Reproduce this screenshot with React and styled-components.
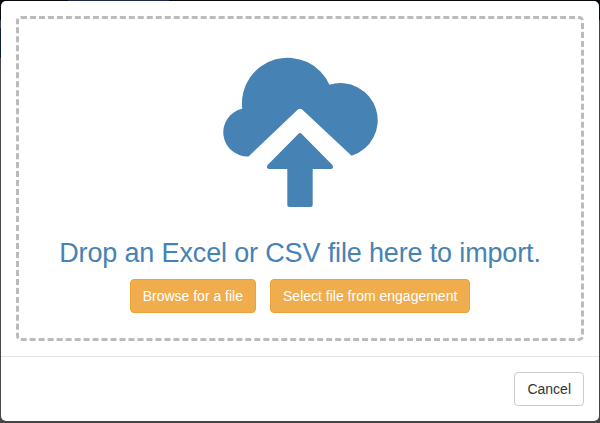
import React from "react";
import styled, { createGlobalStyle } from "styled-components";

const GlobalStyle = createGlobalStyle`
  *, *::before, *::after { box-sizing: border-box; }
  body {
    margin: 0;
    font-family: "Liberation Sans", Arial, sans-serif;
    font-size: 14px;
    line-height: 20px;
    color: #333;
  }
`;

const Backdrop = styled.div`
  height: 423px;
  padding: 1px 1px 2px;
  overflow: hidden;
  background:
    linear-gradient(90deg, #08080f 68px, #1b2b45 68px, #1b2b45 169px, #08080f 169px) 0 0 / 100% 1px no-repeat,
    linear-gradient(180deg, #08080f 20px, #444 20px, #444 28px, #0b2038 28px, #0b2038 58px, #484848 58px) 0 0 / 1px 100% no-repeat,
    linear-gradient(180deg, #08080f 20px, #444 20px);
`;

const Modal = styled.section`
  display: flex;
  flex-direction: column;
  height: 420px;
  background: #fff;
  border-radius: 5px;
`;

const ModalBody = styled.div`
  flex: 1;
  display: flex;
  padding: 15px;
`;

const DropZone = styled.div`
  flex: 1;
  display: flex;
  flex-direction: column;
  align-items: center;
  padding-top: 38px;
  border: 3px dashed #bbb;
  border-radius: 5px;
`;

const UploadIcon = styled.svg`
  display: block;
  width: 156px;
  height: 151px;
  fill: #4682b4;
`;

const Title = styled.h2`
  margin: 29px 0 10px;
  font-size: 27px;
  font-weight: 400;
  line-height: 32px;
  letter-spacing: -0.15px;
  white-space: nowrap;
  color: #4682b4;
`;

const Actions = styled.div`
  display: flex;
  gap: 14px;
`;

const Button = styled.button`
  height: 34px;
  padding: 6px 12px;
  font: inherit;
  white-space: nowrap;
  color: ${({ $primary }) => ($primary ? "#fff" : "#333")};
  background: ${({ $primary }) => ($primary ? "#f0ad4e" : "#fff")};
  border: 1px solid ${({ $primary }) => ($primary ? "#eea236" : "#ccc")};
  border-radius: 4px;
`;

const ModalFooter = styled.footer`
  display: flex;
  justify-content: flex-end;
  padding: 15px;
  border-top: 1px solid #e5e5e5;
`;

export default function App() {
  return (
    <>
      <GlobalStyle />
      <Backdrop>
        <Modal role="dialog">
          <ModalBody>
            <DropZone>
              <UploadIcon viewBox="222 57 156 151" aria-hidden="true">
                <path d="M248.6 156.4A24.15 24.15 0 0 1 242.2 108.7A45.8 45.8 0 0 1 329.5 84.8A37 37 0 0 1 351.6 155.8L302.4 109.8Q300 107.7 297.6 109.8Z" />
                <path d="M298 134.2Q300 132 302 134.2L332.4 165Q334.3 169 330.5 169H312.7V204.5Q312.7 207 310.2 207H289.8Q287.3 207 287.3 204.5V169H269.5Q265.7 169 267.6 165Z" />
              </UploadIcon>
              <Title>Drop an Excel or CSV file here to import.</Title>
              <Actions>
                <Button $primary>Browse for a file</Button>
                <Button $primary>Select file from engagement</Button>
              </Actions>
            </DropZone>
          </ModalBody>
          <ModalFooter>
            <Button>Cancel</Button>
          </ModalFooter>
        </Modal>
      </Backdrop>
    </>
  );
}
